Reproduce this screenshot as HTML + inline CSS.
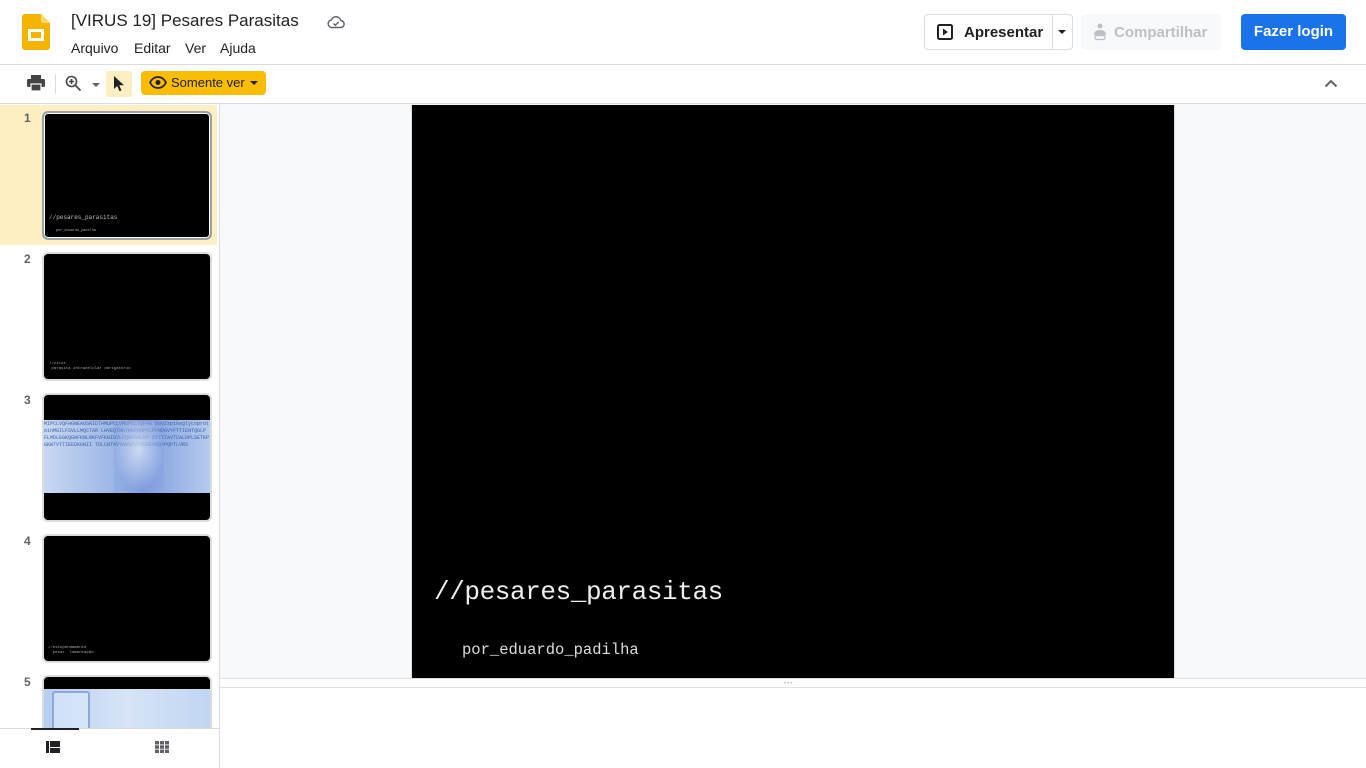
<!DOCTYPE html>
<html><head><meta charset="utf-8"><style>
*{box-sizing:border-box;margin:0;padding:0}
html,body{width:1366px;height:768px;overflow:hidden}
body{background:#fff;font-family:"Liberation Sans",Arial,sans-serif;position:relative;color:#202124}
.a{position:absolute}
.title{left:71px;top:11px;font-size:17px;color:#202124}
.menu{top:40px;font-size:14px;color:#202124}
.btn{border-radius:4px;font-size:14px;font-weight:bold}
.thumb{position:absolute;left:42px;width:170px;height:129px;border:2px solid #dadce0;border-radius:6px;background:#000;overflow:hidden}
.num{position:absolute;left:24px;font-size:12px;color:#5f6368;font-weight:bold}
.mono{font-family:"Liberation Mono",monospace;color:#ddd}
</style></head><body>
<svg class="a" style="left:22px;top:14px" width="28" height="36" viewBox="0 0 28 36"><path d="M3 0h16l9 9v24a3 3 0 0 1-3 3H3a3 3 0 0 1-3-3V3a3 3 0 0 1 3-3z" fill="#f4b400"/><path d="M19 0l9 9h-7a2 2 0 0 1-2-2z" fill="#fbd773"/><rect x="6" y="15" width="16" height="12" fill="#fff"/><rect x="9" y="18" width="10" height="6" fill="#f4b400"/></svg>
<div class="a title">[VIRUS 19] Pesares Parasitas</div>
<svg class="a" style="left:327px;top:15px" width="18" height="14" viewBox="0 0 18 14"><path d="M4.5 12.5h9a3.5 3.5 0 0 0 .3-7A5 5 0 0 0 4.3 5 3.8 3.8 0 0 0 4.5 12.5z" fill="none" stroke="#5f6368" stroke-width="1.5"/><path d="M6.5 8.5l1.8 1.8 3.4-3.4" fill="none" stroke="#5f6368" stroke-width="1.4"/></svg>
<div class="a menu" style="left:71px">Arquivo</div>
<div class="a menu" style="left:134px">Editar</div>
<div class="a menu" style="left:185px">Ver</div>
<div class="a menu" style="left:220px">Ajuda</div>
<div class="a btn" style="left:924px;top:14px;width:149px;height:36px;border:1px solid #dadce0"></div>
<div class="a" style="left:1052px;top:15px;width:1px;height:34px;background:#dadce0"></div>
<svg class="a" style="left:937px;top:24px" width="16" height="16" viewBox="0 0 16 16"><rect x="1" y="1" width="14" height="14" rx="1.5" fill="none" stroke="#202124" stroke-width="2"/><path d="M6 4.5v7l5-3.5z" fill="#202124"/></svg>
<div class="a" style="left:964px;top:24px;font-size:15px;font-weight:bold;color:#202124">Apresentar</div>
<div class="a" style="left:1058px;top:30px;border-left:4px solid transparent;border-right:4px solid transparent;border-top:4px solid #202124"></div>
<div class="a btn" style="left:1081px;top:14px;width:140px;height:36px;background:#f8f9fa"></div>
<svg class="a" style="left:1093px;top:23px" width="14" height="18" viewBox="0 0 14 18"><circle cx="7" cy="3" r="2.5" fill="#bdc1c6"/><path d="M1 12c0-4 3-5 6-5s6 1 6 5z" fill="#bdc1c6"/><rect x="2" y="12.5" width="10" height="4" rx="2" fill="none" stroke="#bdc1c6" stroke-width="1.3"/></svg>
<div class="a" style="left:1114px;top:24px;font-size:15px;font-weight:bold;color:#bdc1c6">Compartilhar</div>
<div class="a btn" style="left:1241px;top:14px;width:105px;height:36px;background:#1a73e8;color:#fff;font-size:15px;text-align:center;line-height:36px">Fazer login</div>
<div class="a" style="left:0;top:64px;width:1366px;height:1px;background:#dadce0"></div>
<svg class="a" style="left:27px;top:75px" width="18" height="16" viewBox="0 0 18 16"><rect x="4" y="0" width="10" height="4" fill="#444"/><rect x="0" y="4" width="18" height="8" rx="1.5" fill="#444"/><rect x="4" y="9" width="10" height="7" fill="#444" stroke="#fff" stroke-width="1.2"/></svg>
<div class="a" style="left:55px;top:74px;width:1px;height:20px;background:#dadce0"></div>
<svg class="a" style="left:65px;top:75px" width="17" height="17" viewBox="0 0 17 17"><circle cx="6.5" cy="6.5" r="5" fill="none" stroke="#444" stroke-width="1.6"/><path d="M10 10l5.5 5.5M6.5 4v5M4 6.5h5" stroke="#444" stroke-width="1.6"/></svg>
<div class="a" style="left:92px;top:83px;border-left:4px solid transparent;border-right:4px solid transparent;border-top:4px solid #5f6368"></div>
<div class="a" style="left:106px;top:71px;width:26px;height:26px;background:#feefc3;border-radius:3px"></div>
<svg class="a" style="left:113px;top:76px" width="12" height="16" viewBox="0 0 12 16"><path d="M1 0v13l3.2-3 2.3 5.3 2-.9-2.3-5.1H11z" fill="#202124"/></svg>
<div class="a" style="left:141px;top:71px;width:125px;height:24px;background:#fbbc04;border-radius:4px"></div>
<svg class="a" style="left:149px;top:76px" width="18" height="13" viewBox="0 0 18 13"><path d="M1 6.5C3 2.5 6 1 9 1s6 1.5 8 5.5C15 10.5 12 12 9 12S3 10.5 1 6.5z" fill="none" stroke="#202124" stroke-width="1.7"/><circle cx="9" cy="6.5" r="2.5" fill="#202124"/></svg>
<div class="a" style="left:171px;top:75px;font-size:13px;color:#202124">Somente ver</div>
<div class="a" style="left:250px;top:81px;border-left:4px solid transparent;border-right:4px solid transparent;border-top:4px solid #202124"></div>
<svg class="a" style="left:1324px;top:79px" width="14" height="9" viewBox="0 0 14 9"><path d="M1.5 7.5L7 2l5.5 5.5" fill="none" stroke="#5f6368" stroke-width="2"/></svg>
<div class="a" style="left:0;top:103px;width:1366px;height:1px;background:#dadce0"></div>
<div class="a" style="left:0;top:104px;width:220px;height:664px;background:#fff;border-right:1px solid #dadce0;overflow:hidden">
 <div class="a" style="left:0;top:1px;width:217px;height:140px;background:#feefc3"></div>
 <div class="num" style="top:7px">1</div>
 <div class="thumb" style="top:7px;border-color:#9aa0a6;box-shadow:0 0 0 1px #fff inset"><div class="a mono" style="left:5px;top:101px;font-size:6px;color:#bbb">//pesares_parasitas</div><div class="a mono" style="left:12px;top:116px;font-size:3.5px;color:#aaa">por_eduardo_padilha</div></div>
 <div class="num" style="top:148px">2</div>
 <div class="thumb" style="top:148px"><div class="a mono" style="left:5px;top:108px;font-size:4px;color:#aaa;line-height:5px">//virus<br>&nbsp;parasita intracelular obrigatorio</div></div>
 <div class="num" style="top:289px">3</div>
 <div class="thumb" style="top:289px"><div class="a" style="left:0;top:25px;width:166px;height:73px;background:linear-gradient(90deg,#c8d8f2,#9fb8e6 40%,#7e9ede 60%,#b7cbee);"></div><div class="a mono" style="left:0;top:26px;width:166px;height:71px;font-size:5px;line-height:7px;color:#3b5fa8;overflow:hidden;word-break:break-all">MIPCLVQFHGNEAOSRIDTHMUPCLVMUPCLVQFAG DoVZspikeglycoproteinMGILFSVLLMQCTAR LHVEQTNGTKKFDNPVLPFNDGVYFTTIENTQGLP FLMDLEGKQGNFKNLRKFVFKNIDVLFQGFSALEP DTTTTAVTCALDPLSETKPGKWTVTTIEEDKGNII TDLCWTMVYADSFVIRGDEVRQYPQPTLVRS</div><div class="a" style="left:70px;top:26px;width:50px;height:70px;background:radial-gradient(ellipse at 50% 40%,rgba(255,255,255,.6),rgba(120,150,220,.2) 70%)"></div></div>
 <div class="num" style="top:430px">4</div>
 <div class="thumb" style="top:430px"><div class="a mono" style="left:4px;top:110px;font-size:4px;color:#aaa;line-height:5px">//estupendamente<br>&nbsp;&nbsp;pesar. lamentação.</div></div>
 <div class="num" style="top:571px">5</div>
 <div class="thumb" style="top:571px"><div class="a" style="left:0;top:12px;width:166px;height:120px;background:linear-gradient(90deg,#b7cff0,#d7e4f7 50%,#c1d5f2)"></div><div class="a" style="left:8px;top:14px;width:38px;height:40px;border:2px solid #8fa8d8;border-radius:3px;background:rgba(230,240,255,.5)"></div></div>
 <div class="a" style="left:0;top:624px;width:219px;height:40px;background:#fff;border-top:1px solid #dadce0"></div>
 <div class="a" style="left:31px;top:624px;width:48px;height:2px;background:#202124"></div>
 <svg class="a" style="left:46px;top:637px" width="14" height="12" viewBox="0 0 14 12"><rect x="0" y="0" width="3" height="12" fill="#202124"/><rect x="4" y="0" width="10" height="6" fill="#202124"/><rect x="4" y="7" width="10" height="5" fill="#202124"/></svg>
 <svg class="a" style="left:155px;top:637px" width="14" height="12" viewBox="0 0 14 12"><g fill="#5f6368"><rect x="0" y="0" width="4" height="3.5"/><rect x="5" y="0" width="4" height="3.5"/><rect x="10" y="0" width="4" height="3.5"/><rect x="0" y="4.3" width="4" height="3.5"/><rect x="5" y="4.3" width="4" height="3.5"/><rect x="10" y="4.3" width="4" height="3.5"/><rect x="0" y="8.6" width="4" height="3.4"/><rect x="5" y="8.6" width="4" height="3.4"/><rect x="10" y="8.6" width="4" height="3.4"/></g></svg>
</div>
<div class="a" style="left:220px;top:104px;width:1146px;height:575px;background:#f8f9fa"></div>
<div class="a" style="left:411px;top:105px;width:764px;height:573px;background:#000;border-left:1px solid #dadce0;border-right:1px solid #dadce0"></div>
<div class="a mono" style="left:434px;top:577px;font-size:26px;color:#eee;letter-spacing:-0.4px">//pesares_parasitas</div>
<div class="a mono" style="left:462px;top:641px;font-size:15.5px;color:#ddd">por_eduardo_padilha</div>
<div class="a" style="left:220px;top:678px;width:1146px;height:1px;background:#e0e0e0"></div>
<div class="a" style="left:784px;top:681px;font-size:6px;color:#bbb;letter-spacing:1px">•••</div>
<div class="a" style="left:220px;top:687px;width:1146px;height:1px;background:#e0e0e0"></div>
</body></html>
